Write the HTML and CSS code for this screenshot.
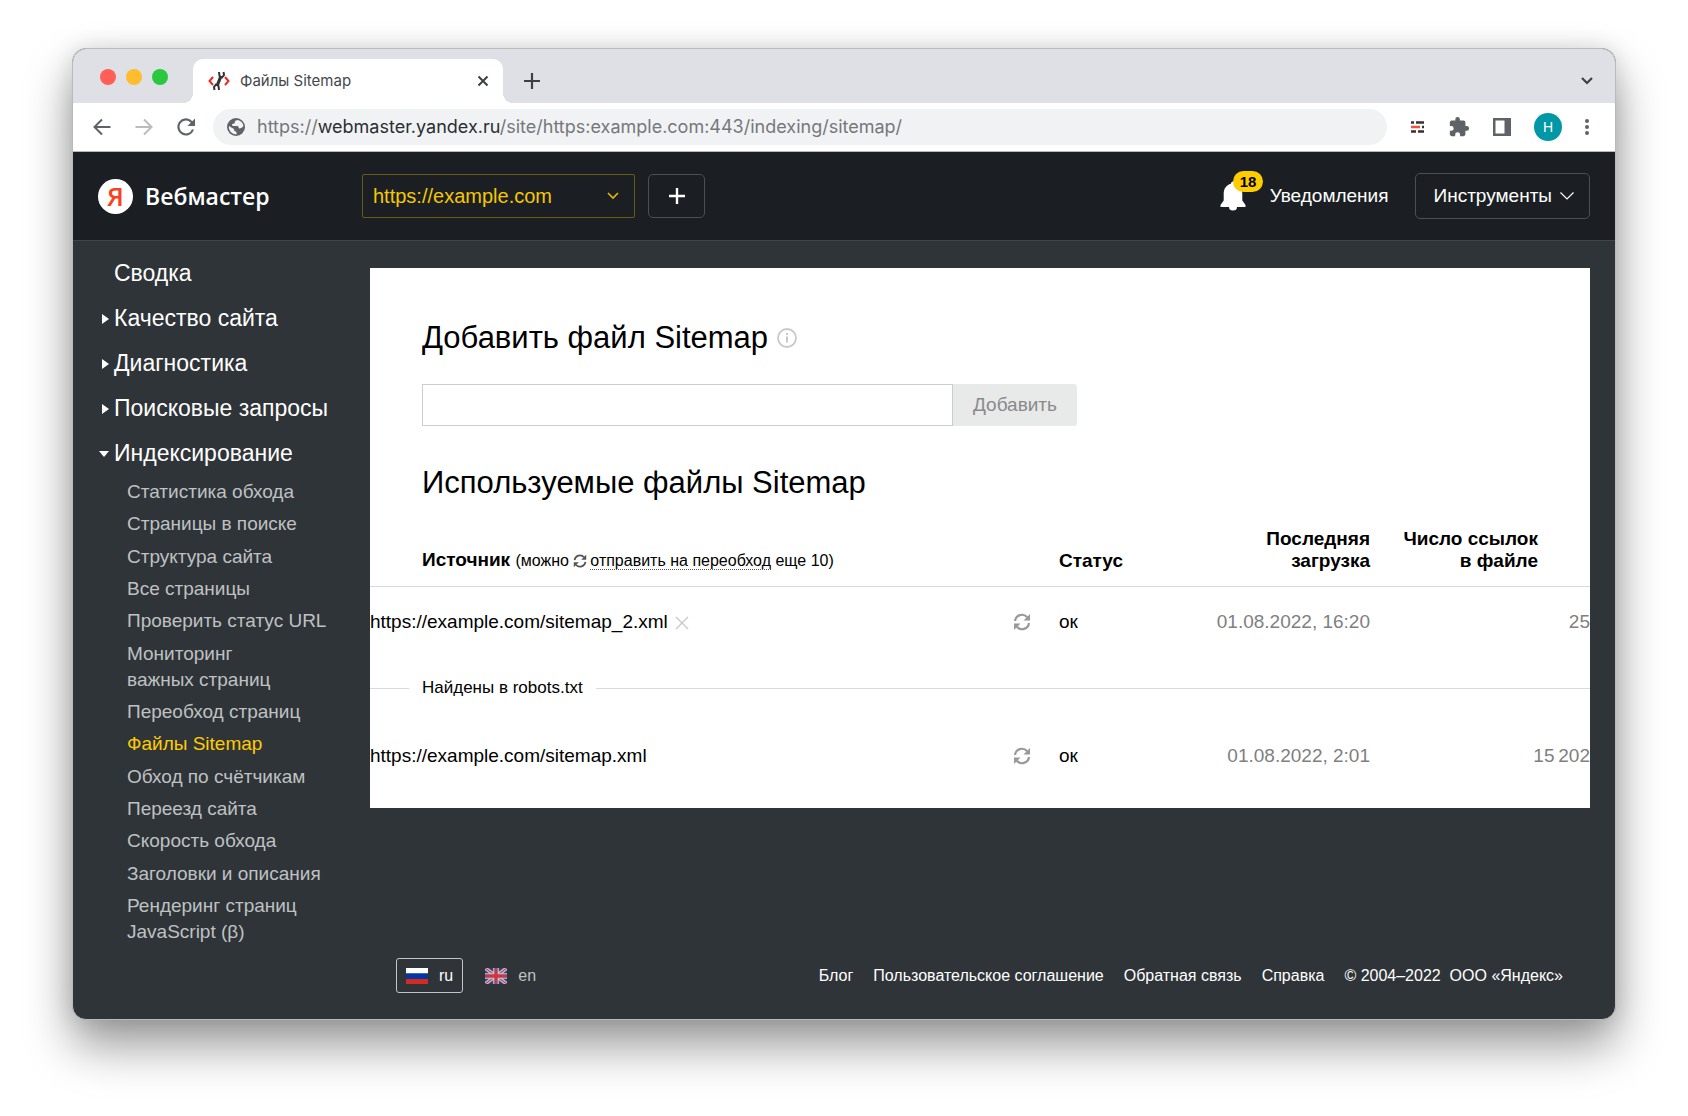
FILE: index.html
```html
<!DOCTYPE html>
<html lang="ru">
<head>
<meta charset="UTF-8" />
<meta name="viewport" content="width=device-width, initial-scale=1" />
<title>Файлы Sitemap</title>
<link rel="stylesheet" href="styles.css">
</head>
<body>
  <!-- Shared icons -->
  <svg class="sprite" aria-hidden="true">
    <symbol id="refresh" viewBox="0 0 18 18">
      <path d="M2 8 A7 7 0 0 1 14.2 4.2 M16 10 A7 7 0 0 1 3.8 13.8" fill="none" stroke="currentColor" stroke-width="2.2" />
      <path d="M17 1 V7.5 H10.5 Z M1 17 V10.500 H7.500 Z" fill="currentColor" />
    </symbol>
  </svg>

  <div class="window">
    <div class="tab-strip">
      <div class="lights">
        <span class="light red"></span>
        <span class="light yellow"></span>
        <span class="light green"></span>
      </div>
      <div class="tab">
        <svg width="22" height="20" viewBox="0 0 22 20" fill="none">
          <path d="M5 6 L1.500 10 L5 14 M17 6 L20.500 10 L17 14" stroke="#e8292b" stroke-width="2" />
          <path d="M9 15 L13 5" stroke="#333" stroke-width="3.200" />
          <path d="M11 1 L11.500 5 L14 6.500 L16 4 L15.500 1 M6.500 19 L6 16 L8 13.500 L10.500 15 L11 19" stroke="#333" stroke-width="2" />
        </svg>
        <span class="tab-title">Файлы Sitemap</span>
        <button class="icon-btn" type="button" aria-label="Закрыть вкладку">
          <svg width="12" height="12" viewBox="0 0 12 12"><path d="M1.500 1.500 L10.500 10.500 M10.500 1.500 L1.500 10.500" stroke="#3c4043" stroke-width="2" /></svg>
        </button>
      </div>
      <button class="icon-btn new-tab" type="button" aria-label="Новая вкладка">
        <svg width="16" height="16" viewBox="0 0 16 16"><path d="M8 0 V16 M0 8 H16" stroke="#3c4043" stroke-width="2.200" /></svg>
      </button>
      <button class="icon-btn tab-search" type="button" aria-label="Поиск вкладок">
        <svg width="12" height="8" viewBox="0 0 12 8"><path d="M1 1 L6 6 L11 1" fill="none" stroke="#3c4043" stroke-width="2.200" /></svg>
      </button>
    </div>

    <div class="toolbar">
      <button class="icon-btn" type="button" aria-label="Назад">
        <svg width="18" height="18" viewBox="0 0 18 18"><path d="M17.500 9 H2 M9 1.500 L1.500 9 L9 16.500" fill="none" stroke="#5f6368" stroke-width="2" /></svg>
      </button>
      <button class="icon-btn" type="button" aria-label="Вперёд">
        <svg width="18" height="18" viewBox="0 0 18 18"><path d="M0.500 9 H16 M9 1.500 L16.500 9 L9 16.500" fill="none" stroke="#babcbe" stroke-width="2" /></svg>
      </button>
      <button class="icon-btn" type="button" aria-label="Обновить">
        <svg width="18" height="18" viewBox="0 0 18 18"><path d="M16 11.500 A7.500 7.500 0 1 1 14.300 3.700 L16 5.500" fill="none" stroke="#5f6368" stroke-width="2.200" /><path d="M18 0.500 V8 H10.500 Z" fill="#5f6368" /></svg>
      </button>
      <div class="address">
        <svg width="18" height="18" viewBox="0 0 18 18">
          <circle cx="9" cy="9" r="9" fill="#5f6368" />
          <path d="M10.500 2 L8 3 L7.500 5.500 L5 6 L5.500 8 L11 8 L12 10.500 L14.500 10 L16.500 8 A7.500 7.500 0 0 0 10.500 2 Z M1.800 8 L7 11 L7 12.500 L9.500 14 L9.500 16.500 A7.500 7.500 0 0 1 1.800 8 Z" fill="#f1f3f4" />
        </svg>
        <div class="url" role="textbox" aria-label="Адресная строка" contenteditable="true" spellcheck="false">https://<span class="host">webmaster.yandex.ru</span>/site/https:example.com:443/indexing/sitemap/</div>
      </div>
      <div class="extensions">
        <button class="icon-btn" type="button" aria-label="Расширение">
          <svg width="14" height="12" viewBox="0 0 14 12">
            <path d="M0 1.500 H3 M5 1.500 H13 M11 6 H13 M0 10.500 H5 M7 10.500 H13" stroke="#333" stroke-width="2.400" />
            <path d="M0 6 H9" stroke="#f4513f" stroke-width="2.600" />
          </svg>
        </button>
        <button class="icon-btn" type="button" aria-label="Расширения">
          <svg width="22" height="22" viewBox="0 0 24 24"><path d="M20.500 11H19V7a2 2 0 0 0-2-2h-4V3.500a2.500 2.500 0 0 0-5 0V5H4a2 2 0 0 0-2 2v3.800h1.500a2.700 2.700 0 0 1 0 5.400H2V20a2 2 0 0 0 2 2h3.800v-1.500a2.700 2.700 0 0 1 5.400 0V22H17a2 2 0 0 0 2-2v-4h1.500a2.500 2.500 0 0 0 0-5z" fill="#5f6368" /></svg>
        </button>
        <button class="icon-btn" type="button" aria-label="Боковая панель">
          <svg width="18" height="18" viewBox="0 0 18 18"><path d="M0 0 H18 V18 H0 Z M2.500 2.500 V15.500 H11.500 V2.500 Z" fill="#5f6368" fill-rule="evenodd" /></svg>
        </button>
        <button class="avatar" type="button">H</button>
        <button class="icon-btn" type="button" aria-label="Меню">
          <svg width="4" height="18" viewBox="0 0 4 18" fill="#5f6368"><circle cx="2" cy="3" r="2" /><circle cx="2" cy="9" r="2" /><circle cx="2" cy="15" r="2" /></svg>
        </button>
      </div>
    </div>

    <header class="header">
      <a class="logo" href="#"><span class="logo-mark">Я</span>Вебмастер</a>
      <div class="site-picker">
        <select class="site-select" aria-label="Сайт">
          <option>https://example.com</option>
        </select>
        <svg class="site-arrow" width="12" height="8" viewBox="0 0 12 8"><path d="M1 1 L6 6 L11 1" fill="none" stroke="#e8b800" stroke-width="1.600" /></svg>
      </div>
      <button class="add-site" type="button" aria-label="Добавить сайт">
        <svg width="16" height="16" viewBox="0 0 16 16"><path d="M8 0 V16 M0 8 H16" stroke="#fff" stroke-width="2.400" /></svg>
      </button>
      <a class="notifications" href="#">
        <span class="bell">
          <svg width="26" height="30" viewBox="0 0 26 30"><path d="M13 0.500 C14.500 0.500 15 1.500 15 2.800 C20 4 22.300 8 22.300 13 V19.500 L25.500 24 V26 H0.500 V24 L3.700 19.500 V13 C3.700 8 6 4 11 2.800 C11 1.500 11.500 0.500 13 0.500 Z M9 26 H17 A4 3.500 0 0 1 9 26 Z" fill="#fff" /></svg>
          <span class="badge">18</span>
        </span>
        Уведомления
      </a>
      <button class="tools" type="button">
        Инструменты
        <svg width="14" height="8" viewBox="0 0 14 8"><path d="M0.500 0.500 L7 7 L13.500 0.500" fill="none" stroke="#fff" stroke-width="1.200" /></svg>
      </button>
    </header>

    <div class="page">
      <nav class="sidebar" aria-label="Разделы">
        <a class="section" href="#">Сводка</a>
        <a class="section closed" href="#">Качество сайта</a>
        <a class="section closed" href="#">Диагностика</a>
        <a class="section closed" href="#">Поисковые запросы</a>
        <a class="section opened" href="#">Индексирование</a>
        <ul class="subnav">
          <li><a href="#">Статистика обхода</a></li>
          <li><a href="#">Страницы в поиске</a></li>
          <li><a href="#">Структура сайта</a></li>
          <li><a href="#">Все страницы</a></li>
          <li><a href="#">Проверить статус URL</a></li>
          <li><a href="#">Мониторинг<br>важных страниц</a></li>
          <li><a href="#">Переобход страниц</a></li>
          <li><a class="active" href="#">Файлы Sitemap</a></li>
          <li><a href="#">Обход по счётчикам</a></li>
          <li><a href="#">Переезд сайта</a></li>
          <li><a href="#">Скорость обхода</a></li>
          <li><a href="#">Заголовки и описания</a></li>
          <li><a href="#">Рендеринг страниц<br>JavaScript (β)</a></li>
        </ul>
      </nav>

      <div class="content">
        <main class="card">
          <h1 class="title">
            <label for="sitemapUrl">Добавить файл Sitemap</label>
            <svg width="20" height="20" viewBox="0 0 20 20"><circle cx="10" cy="10" r="9" fill="none" stroke="#c8c8c8" stroke-width="1.800" /><path d="M10 8.500 V14.500 M10 5 V7" stroke="#c8c8c8" stroke-width="2" /></svg>
          </h1>
          <form class="add-form">
            <input class="add-input" type="text" id="sitemapUrl" name="sitemapUrl" />
            <button class="add-btn" type="submit" disabled>Добавить</button>
          </form>

          <h2 class="title">Используемые файлы Sitemap</h2>
          <table class="files">
            <thead>
              <tr>
                <th class="source" colspan="2">Источник
                  <span class="hint">(можно <svg class="hint-icon"><use href="#refresh" /></svg><a href="#">отправить на переобход</a> еще 10)</span>
                </th>
                <th class="status">Статус</th>
                <th class="date">Последняя<br>загрузка</th>
                <th class="count">Число ссылок<br>в файле</th>
              </tr>
            </thead>
            <tbody>
              <tr class="manual">
                <td class="source">https://example.com/sitemap_2.xml
                  <button class="icon-btn remove" type="button" aria-label="Удалить">
                    <svg width="14" height="14" viewBox="0 0 14 14"><path d="M1 1 L13 13 M13 1 L1 13" stroke="#c8c8c8" stroke-width="1.300" /></svg>
                  </button>
                </td>
                <td class="resend"><button class="icon-btn" type="button" aria-label="Переобход"><svg width="18" height="18"><use href="#refresh" /></svg></button></td>
                <td class="status">ок</td>
                <td class="date">01.08.2022, 16:20</td>
                <td class="count">25</td>
              </tr>
              <tr>
                <td class="divider" colspan="5"><div class="divider-line">Найдены в robots.txt</div></td>
              </tr>
              <tr class="robots">
                <td class="source">https://example.com/sitemap.xml</td>
                <td class="resend"><button class="icon-btn" type="button" aria-label="Переобход"><svg width="18" height="18"><use href="#refresh" /></svg></button></td>
                <td class="status">ок</td>
                <td class="date">01.08.2022, 2:01</td>
                <td class="count">15&#8201;202</td>
              </tr>
            </tbody>
          </table>
        </main>

        <footer class="footer">
          <div class="langs">
            <a class="lang current" href="#">
              <svg width="22" height="16" viewBox="0 0 22 16"><path d="M0 0 H22 V5.500 H0 Z" fill="#fff" /><path d="M0 5.500 H22 V11 H0 Z" fill="#0039a6" /><path d="M0 11 H22 V16 H0 Z" fill="#d52b1e" /></svg>
              ru
            </a>
            <a class="lang" href="#">
              <svg width="22" height="16" viewBox="0 0 22 16">
                <path d="M0 0 H22 V16 H0 Z" fill="#24408e" />
                <path d="M0 0 L22 16 M22 0 L0 16" stroke="#c9cbd0" stroke-width="3.600" />
                <path d="M0 0 L22 16 M22 0 L0 16" stroke="#c03a4c" stroke-width="1.200" />
                <path d="M11 0 V16 M0 8 H22" stroke="#c9cbd0" stroke-width="5.600" />
                <path d="M11 0 V16 M0 8 H22" stroke="#c03a4c" stroke-width="3.400" />
              </svg>
              en
            </a>
          </div>
          <div class="links">
            <a href="#">Блог</a>
            <a href="#">Пользовательское соглашение</a>
            <a href="#">Обратная связь</a>
            <a href="#">Справка</a>
            <span>© 2004–2022&nbsp; ООО «<a href="#">Яндекс</a>»</span>
          </div>
        </footer>
      </div>
    </div>
  </div>
</body>
</html>
```

FILE: styles.css
```css
/* Reset and base */
* {
  box-sizing: border-box;
}
body {
  margin: 0;
  padding: 48px 72px 96px;
  min-height: 100vh;
  display: flex;
  background-color: #fff;
  font-family: "Liberation Sans", Arial, sans-serif;
  font-size: 19px;
  line-height: 22px;
  color: #000;
}
a {
  color: inherit;
  text-decoration: none;
}
button {
  font: inherit;
  cursor: pointer;
}
svg {
  display: block;
  flex: none;
}
.sprite {
  position: absolute;
  width: 0;
  height: 0;
}
.icon-btn {
  display: flex;
  padding: 0;
  border: none;
  background: none;
  color: #999;
}
/* Browser window */
.window {
  flex: 1;
  min-width: 0;
  display: flex;
  flex-direction: column;
  border: 1px solid #b9babc;
  border-radius: 14px;
  overflow: hidden;
  background-color: #2f3439;
  box-shadow: 0 26px 48px rgba(0, 0, 0, 0.4), 0 0 24px rgba(0, 0, 0, 0.12);
}
.tab-strip {
  display: flex;
  align-items: center;
  padding: 10px 22px 0 27px;
  background-color: #dfe0e5;
}
.lights {
  display: flex;
  gap: 10px;
  padding-bottom: 8px;
}
.light {
  width: 16px;
  height: 16px;
  border-radius: 50%;
}
.red {
  background-color: #ff5f57;
}
.yellow {
  background-color: #febc2e;
}
.green {
  background-color: #28c840;
}
.tab {
  position: relative;
  display: flex;
  align-items: center;
  width: 310px;
  height: 44px;
  margin-left: 25px;
  padding: 0 14px 0 15px;
  border-radius: 10px 10px 0 0;
  background-color: #fff;
  font-family: Inter, sans-serif;
  font-size: 15px;
  color: #45494d;
}
/* Rounded feet of the active tab */
.tab::before,
.tab::after {
  content: "";
  position: absolute;
  bottom: 0;
  width: 10px;
  height: 10px;
}
.tab::before {
  right: 100%;
  background: radial-gradient(circle at 0 0, transparent 10px, #fff 10px);
}
.tab::after {
  left: 100%;
  background: radial-gradient(circle at 100% 0, transparent 10px, #fff 10px);
}
.tab-title {
  flex: 1;
  margin-left: 10px;
}
.new-tab {
  margin-left: 21px;
}
.tab-search {
  margin-left: auto;
}
.toolbar {
  display: flex;
  align-items: center;
  gap: 24px;
  padding: 6px 26px 6px 20px;
  background-color: #fff;
  border-bottom: 1px solid #b5b8ba;
}
.address {
  flex: 1;
  display: flex;
  align-items: center;
  gap: 12px;
  height: 36px;
  margin-left: -6px;
  padding: 0 14px;
  border-radius: 18px;
  background-color: #f1f2f4;
}
.url {
  font-family: Inter, sans-serif;
  font-size: 18px;
  color: #75787b;
  white-space: nowrap;
}
.host {
  color: #2b2e31;
}
.extensions {
  display: flex;
  align-items: center;
  gap: 23px;
}
.avatar {
  width: 28px;
  height: 28px;
  padding: 0;
  border: none;
  border-radius: 50%;
  background-color: #0097a7;
  color: #fff;
  font-size: 14px;
}
/* Service header */
.header {
  display: flex;
  align-items: center;
  padding: 21px 25px;
  background-color: #1b1f23;
  border-bottom: 1px solid #40454a;
  color: #fff;
}
.logo {
  display: flex;
  align-items: center;
  gap: 12px;
  width: 264px;
  font-family: "Open Sans", sans-serif;
  font-size: 23px;
  font-weight: 600;
}
.logo-mark {
  width: 35px;
  height: 35px;
  border-radius: 50%;
  background-color: #fff;
  color: #fc3f1d;
  font-size: 26px;
  line-height: 34px;
  text-align: center;
}
.site-picker {
  position: relative;
  width: 273px;
}
.site-select {
  appearance: none;
  width: 100%;
  height: 44px;
  padding: 0 36px 0 10px;
  border: 1px solid #6b5a14;
  border-radius: 2px;
  background: none;
  color: #f5c800;
  font: inherit;
  font-size: 20px;
}
.site-arrow {
  position: absolute;
  right: 16px;
  top: 18px;
  pointer-events: none;
}
.add-site,
.tools {
  display: flex;
  align-items: center;
  justify-content: center;
  border: 1px solid #4c5055;
  border-radius: 5px;
  background: none;
  color: #fff;
}
.add-site {
  width: 57px;
  height: 44px;
  margin-left: 13px;
}
.notifications {
  display: flex;
  align-items: center;
  gap: 24px;
  margin-left: auto;
}
.bell {
  position: relative;
}
.badge {
  position: absolute;
  left: 13px;
  top: -10px;
  padding: 0 7px;
  border-radius: 11px;
  background-color: #ffcc00;
  color: #000;
  font-size: 15px;
  font-weight: 700;
  line-height: 21px;
}
.tools {
  gap: 8px;
  height: 46px;
  margin-left: 26px;
  padding: 0 15px 0 18px;
}
/* Sidebar */
.page {
  flex: 1;
  display: flex;
}
.sidebar {
  display: flex;
  flex-direction: column;
  width: 297px;
  padding: 10px 0 74px 24px;
  color: #fff;
}
.section {
  display: flex;
  align-items: center;
  padding-left: 17px;
  font-size: 23px;
  line-height: 45px;
}
.closed,
.opened {
  padding-left: 0;
}
.closed::before,
.opened::before {
  content: "";
  border: 5px solid transparent;
}
.closed::before {
  margin: 0 0 0 5px;
  border-left: 7px solid #fff;
  border-right-width: 0;
}
.closed::before,
.opened::before {
  margin-right: 5px;
}
.opened::before {
  margin-left: 2px;
  border-top: 6px solid #fff;
  border-bottom-width: 0;
}
.subnav {
  flex: 1;
  display: flex;
  flex-direction: column;
  justify-content: space-between;
  margin: 3px 0 0;
  padding: 0 0 0 30px;
  list-style: none;
  color: #bfc1c2;
  line-height: 26px;
}
.active {
  color: #ffcc00;
}
/* Card with the sitemap files */
.content {
  flex: 1;
  min-width: 0;
  display: flex;
  flex-direction: column;
  justify-content: space-between;
  padding: 27px 25px 26px 0;
}
.card {
  padding: 52px 0 16px;
  background-color: #fff;
}
.title {
  display: flex;
  align-items: center;
  gap: 9px;
  margin: 0 52px;
  font-size: 31px;
  font-weight: 400;
  line-height: 36px;
}
.add-form {
  display: flex;
  margin: 28px 52px 39px;
}
.add-input {
  width: 531px;
  height: 42px;
  padding: 0 12px;
  border: 1px solid #ccc;
  font: inherit;
}
.add-btn {
  padding: 0 20px;
  border: none;
  border-radius: 0 3px 3px 0;
  background-color: #e8e9e9;
  color: #8a8a8a;
}
.files {
  width: 100%;
  margin-top: 27px;
  border-collapse: collapse;
}
.files th {
  padding: 0 0 14px;
  border-bottom: 1px solid #d9d9d9;
  text-align: left;
  vertical-align: bottom;
}
.files td {
  padding: 0;
}
.files .manual td {
  padding: 24px 0 44px;
}
.files .robots td {
  padding: 46px 0 25px;
}
.files .source {
  padding-left: 52px;
}
.hint {
  font-size: 16px;
  font-weight: 400;
}
.hint-icon {
  display: inline-block;
  width: 14px;
  height: 14px;
  margin-right: 3px;
  vertical-align: -2px;
  color: #555;
}
.hint a {
  border-bottom: 1px dotted #555;
}
.remove {
  display: inline-flex;
  margin-left: 2px;
  vertical-align: -2px;
}
.resend {
  width: 46px;
}
.status {
  width: 110px;
}
.files .date {
  width: 201px;
  text-align: right;
}
.files .count {
  width: 220px;
  padding-right: 52px;
  text-align: right;
}
td.date,
td.count {
  color: #808080;
}
.divider-line {
  display: flex;
  align-items: center;
  gap: 13px;
  font-size: 17px;
}
.divider-line::before,
.divider-line::after {
  content: "";
  height: 1px;
  background-color: #d9d9d9;
}
.divider-line::before {
  width: 39px;
}
.divider-line::after {
  flex: 1;
}
/* Footer */
.footer {
  display: flex;
  align-items: center;
  justify-content: space-between;
  padding: 0 27px 0 26px;
  color: #fff;
  font-size: 16px;
}
.langs,
.links {
  display: flex;
  align-items: center;
}
.langs {
  gap: 12px;
}
.links {
  gap: 20px;
}
.lang {
  display: flex;
  align-items: center;
  gap: 11px;
  height: 35px;
  padding: 0 9px;
  border: 1px solid transparent;
  border-radius: 3px;
  color: #bfc1c2;
}
.current {
  border-color: #c3c5c6;
  color: #fff;
}
```
